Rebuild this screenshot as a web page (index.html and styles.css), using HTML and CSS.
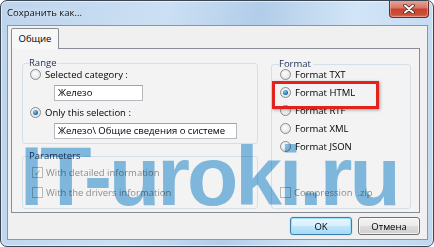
FILE: index.html
```html
<!DOCTYPE html>
<html lang="ru">
<head>
  <meta charset="UTF-8">
  <title>Сохранить как...</title>
  <link rel="stylesheet" href="styles.css">
</head>
<body>
  <div class="window">
    <div class="titlebar">
      <span class="title">Сохранить как...</span>
      <button class="close" aria-label="Закрыть">
        <svg width="12" height="10" viewBox="0 0 12 10">
          <path d="M2 1.5 L10 8.5 M10 1.5 L2 8.5" stroke="#4a2520" stroke-width="3.6" stroke-linecap="round"/>
          <path d="M2 1.5 L10 8.5 M10 1.5 L2 8.5" stroke="#ffffff" stroke-width="2" stroke-linecap="round"/>
        </svg>
      </button>
    </div>

    <div class="client">
      <div class="tabs">
        <div class="tab active">Общие</div>
      </div>

      <div class="panel">
        <div class="col-left">
          <div class="group range">
            <div class="group-title">Range</div>
            <label class="row"><span class="radio"></span>Selected category :</label>
            <div class="field short">Железо</div>
            <label class="row"><span class="radio on"></span>Only this selection :</label>
            <div class="field long">Железо\ Общие сведения о системе</div>
          </div>

          <div class="group params">
            <div class="group-title">Parameters</div>
            <label class="row check-row disabled first"><span class="check on"></span>With detailed information</label>
            <label class="row check-row disabled"><span class="check"></span>With the drivers information</label>
          </div>
        </div>

        <div class="group format">
          <div class="group-title">Format</div>
          <label class="row fmt"><span class="radio"></span>Format TXT</label>
          <label class="row fmt marked"><span class="radio on"></span>Format HTML</label>
          <label class="row fmt"><span class="radio"></span>Format RTF</label>
          <label class="row fmt"><span class="radio"></span>Format XML</label>
          <label class="row fmt"><span class="radio"></span>Format JSON</label>
          <label class="row zip disabled"><span class="check"></span>Compression&nbsp; .zip</label>
        </div>
      </div>

      <div class="actions">
        <button class="btn default">OK</button>
        <button class="btn">Отмена</button>
      </div>
    </div>

    <div class="watermark">IT-uroki.ru</div>
  </div>
</body>
</html>
```

FILE: styles.css
```css
* { box-sizing: border-box; margin: 0; padding: 0; }
body {
  font-family: 'Open Sans', 'Noto Sans', sans-serif;
  font-size: 9.5px;
  color: #000;
  background: #fff;
  width: 434px;
  height: 247px;
  overflow: hidden;
}
.window {
  position: relative;
  width: 434px;
  height: 247px;
  border: 1px solid #3b4653;
  border-radius: 7px;
  padding-bottom: 6px;
  background: linear-gradient(100deg, #bcd4ec 0%, #cce0f4 35%, #b2cde9 55%, #d2e5f7 75%, #c0d7ef 100%);
  box-shadow: inset 0 0 0 1px rgba(255,255,255,0.55);
  overflow: hidden;
}
.titlebar {
  display: flex;
  align-items: flex-start;
  height: 24px;
  padding-left: 6px;
}
.title {
  line-height: 24px;
  font-size: 9.5px;
  color: #111;
  text-shadow: 0 0 6px rgba(255,255,255,0.9);
}
.close {
  margin-left: auto;
  margin-right: 4px;
  margin-top: -1px;
  width: 40px;
  height: 18px;
  border: 1px solid #6a2b25;
  border-top: none;
  border-radius: 0 0 4px 4px;
  background: linear-gradient(#e8a89b 0%, #d9786a 45%, #c8432f 55%, #c9503b 85%, #d97560 100%);
  box-shadow: inset 0 0 0 1px rgba(255,200,190,0.45);
  display: flex;
  align-items: center;
  justify-content: center;
}
.client {
  margin: 0 5px 0 6px;
  height: 215px;
  border: 1px solid #8497ad;
  background: #f0f0f0;
  padding: 2px 7px 4px 3px;
  display: flex;
  flex-direction: column;
}
.tabs { display: flex; position: relative; z-index: 1; margin-bottom: -1px; }
.tab {
  width: 48px;
  height: 21px;
  border: 1px solid #898c95;
  border-bottom: none;
  border-radius: 2px 2px 0 0;
  background: #f7f7f7;
  text-align: center;
  line-height: 20px;
}
.panel {
  height: 165px;
  border: 1px solid #898c95;
  background: #f3f3f3;
  padding: 14px 8px 3px 10px;
  display: grid;
  grid-template-columns: 236px 140px;
  column-gap: 13px;
}
.col-left { display: flex; flex-direction: column; }
.group {
  border: 1px solid #d5dfe5;
  border-radius: 3px;
  padding: 0 0 0 7px;
  display: flex;
  flex-direction: column;
}
.group-title {
  align-self: flex-start;
  line-height: 14px;
  height: 14px;
  margin: -8px 0 -4px -1px;
  padding: 0 2px 0 0;
  background: #f3f3f3;
  color: #1a2f55;
}
.row {
  display: flex;
  align-items: center;
  height: 16px;
  gap: 4px;
  white-space: nowrap;
}
.radio {
  width: 11px;
  height: 11px;
  border-radius: 50%;
  border: 1px solid #8a8c8e;
  background: radial-gradient(circle at 45% 40%, #ffffff 0%, #e9e9e9 60%, #cfcfcf 100%);
  flex: none;
  display: flex;
  align-items: center;
  justify-content: center;
}
.radio.on::after {
  content: "";
  width: 5px;
  height: 5px;
  border-radius: 50%;
  background: radial-gradient(circle at 40% 35%, #8fd2f5 0%, #2a7fc0 50%, #0d3f74 100%);
}
.check {
  width: 11px;
  height: 11px;
  border: 1px solid #b8b8b8;
  background: #f6f6f6;
  flex: none;
  display: flex;
  align-items: center;
  justify-content: center;
  font-size: 9px;
  line-height: 1;
  color: #a8a8a8;
}
.check.on::after { content: "✓"; }
.disabled { color: #8e8e8e; }
.field {
  height: 16px;
  margin: 3px 0 0 24px;
  border: 1px solid #b5b9c0;
  border-top-color: #9fa3aa;
  background: #fff;
  line-height: 14px;
  padding-left: 3px;
  white-space: nowrap;
  overflow: hidden;
}
.field.short { width: 89px; }
.field.long { width: 183px; }
.range { height: 81px; }
.range .row:nth-of-type(2) { margin-top: 3px; }
.params { margin-top: 12px; padding-bottom: 8px; }
.check-row { margin-left: 2px; gap: 3px; margin-top: 4px; }
.check-row.first { margin-top: 5px; }
.format { margin-top: 1px; padding-left: 8px; padding-bottom: 8px; }
.format .group-title { margin-bottom: -6px; }
.fmt { height: 18px; }
.marked { position: relative; }
.marked::before {
  content: "";
  position: absolute;
  left: -8px;
  top: -2px;
  width: 101px;
  height: 22px;
  border: 3px solid #e3211d;
  box-shadow: 1px 1px 3px rgba(0,0,0,0.35);
}
.zip { margin-top: auto; gap: 3px; }
.actions {
  display: flex;
  justify-content: flex-end;
  gap: 6px;
  margin-top: 4px;
}
.btn {
  width: 62px;
  height: 18px;
  font-family: inherit;
  font-size: 9.5px;
  color: #000;
  border: 1px solid #707070;
  border-radius: 3px;
  background: linear-gradient(#f4f4f4 0%, #ebebeb 48%, #dddddd 52%, #cfcfcf 100%);
  box-shadow: inset 0 0 0 1px rgba(255,255,255,0.7);
}
.btn.default {
  border-color: #3c7fb1;
  background: linear-gradient(#eaf6fd 0%, #d9f0fc 48%, #bee6fd 52%, #a7d9f5 100%);
  box-shadow: inset 0 0 0 1px #9ee0fb, 0 0 1px #48a3dc;
}
.watermark {
  position: absolute;
  left: 19px;
  top: 125px;
  font-family: 'Liberation Sans', Arial, sans-serif;
  font-weight: bold;
  font-size: 84px;
  line-height: 100px;
  letter-spacing: -3px;
  color: #84c0e6;
  mix-blend-mode: multiply;
  pointer-events: none;
  white-space: nowrap;
}
```
